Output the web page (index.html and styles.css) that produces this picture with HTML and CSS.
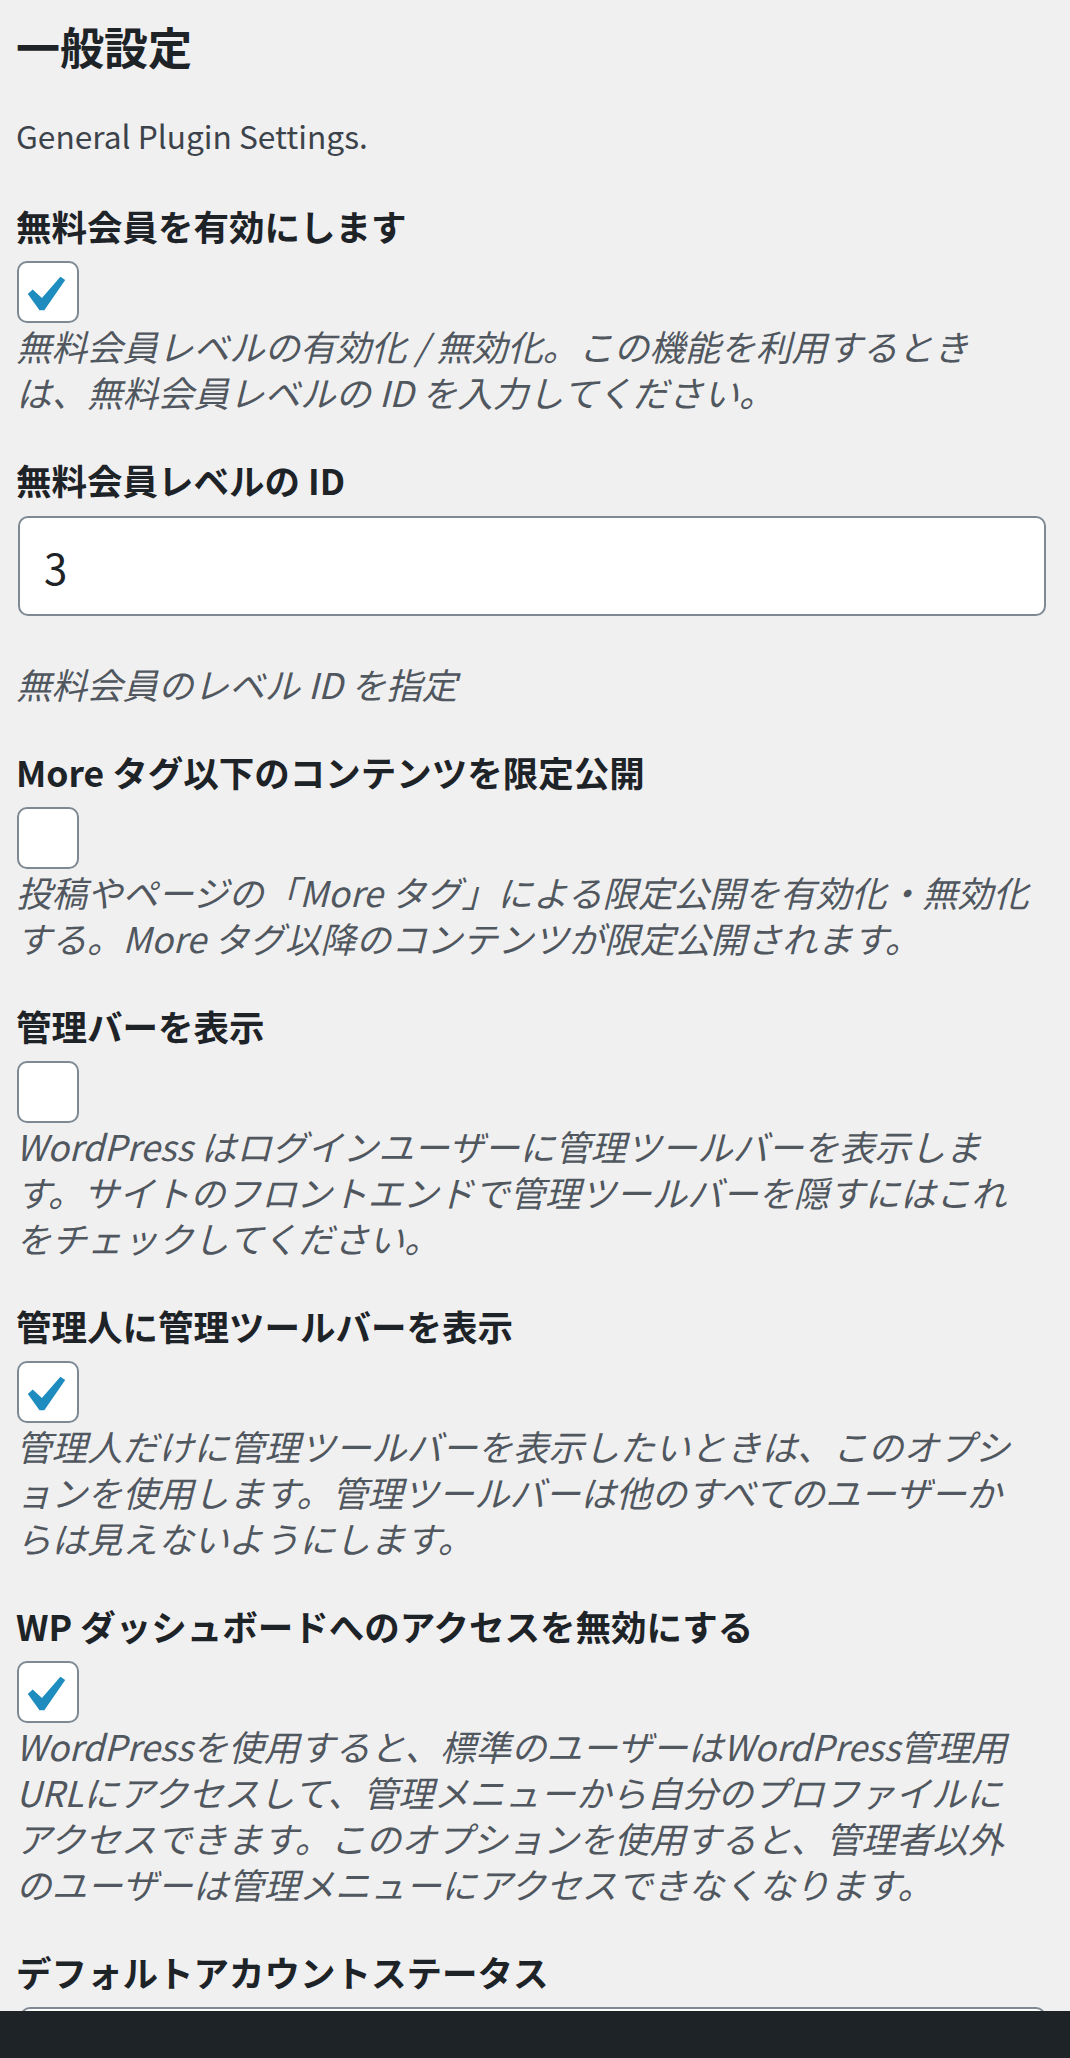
FILE: index.html
```
<!DOCTYPE html>
<html lang="ja">
    <head>
        <meta charset="UTF-8">
        <meta name="viewport" content="width=device-width, initial-scale=1.0">
        <title>一般設定</title>
        <link rel="stylesheet" href="styles.css">
    </head>
<body>
    <div class="screen">
        <div class="wrap">
            <h2>一般設定</h2>
            <p class="intro">General Plugin Settings.</p>

            <div class="field">
                <label class="field-label">無料会員を有効にします</label>
                <span class="check">
                    <svg viewBox="3.32 1.07 15.85 15.85"><path d="M14.83 4.89l1.34.94-5.81 8.38H9.02L5.78 9.67l1.34-1.25 2.57 2.4z"/></svg>
                </span>
                <p class="description">無料会員レベルの有効化 / 無効化。この機能を利用するとき<br>は、無料会員レベルの ID を入力してください。</p>
            </div>

            <div class="field">
                <label class="field-label" for="level">無料会員レベルの ID</label>
                <input class="text-input" type="text" id="level" value="3">
                <p class="description spaced">無料会員のレベル ID を指定</p>
            </div>

            <div class="field">
                <label class="field-label">More タグ以下のコンテンツを限定公開</label>
                <span class="check"></span>
                <p class="description">投稿やページの「More タグ」による限定公開を有効化・無効化<br>する。More タグ以降のコンテンツが限定公開されます。</p>
            </div>

            <div class="field">
                <label class="field-label">管理バーを表示</label>
                <span class="check"></span>
                <p class="description">WordPress はログインユーザーに管理ツールバーを表示しま<br>す。サイトのフロントエンドで管理ツールバーを隠すにはこれ<br>をチェックしてください。</p>
            </div>

            <div class="field">
                <label class="field-label">管理人に管理ツールバーを表示</label>
                <span class="check">
                    <svg viewBox="3.32 1.07 15.85 15.85"><path d="M14.83 4.89l1.34.94-5.81 8.38H9.02L5.78 9.67l1.34-1.25 2.57 2.4z"/></svg>
                </span>
                <p class="description">管理人だけに管理ツールバーを表示したいときは、このオプシ<br>ョンを使用します。管理ツールバーは他のすべてのユーザーか<br>らは見えないようにします。</p>
            </div>

            <div class="field">
                <label class="field-label">WP ダッシュボードへのアクセスを無効にする</label>
                <span class="check">
                    <svg viewBox="3.32 1.07 15.85 15.85"><path d="M14.83 4.89l1.34.94-5.81 8.38H9.02L5.78 9.67l1.34-1.25 2.57 2.4z"/></svg>
                </span>
                <p class="description">WordPressを使用すると、標準のユーザーはWordPress管理用<br>URLにアクセスして、管理メニューから自分のプロファイルに<br>アクセスできます。このオプションを使用すると、管理者以外<br>のユーザーは管理メニューにアクセスできなくなります。</p>
            </div>

            <div class="field">
                <label class="field-label">デフォルトアカウントステータス</label>
                <div class="select-box"></div>
            </div>
        </div>
        <div class="bottom-bar"></div>
    </div>
</body>
</html>
```

FILE: styles.css
```
html, body {
    margin: 0;
    padding: 0;
}
body {
    background: #f0f0f1;
    color: #1d2327;
    font-family: "Noto Sans CJK JP", "Noto Sans", sans-serif;
}
.screen {
    position: relative;
    height: 2058px;
    overflow: hidden;
}
.wrap {
    padding: 18px 24px 0 16px;
}
h2 {
    margin: 0;
    font-size: 44px;
    line-height: 56px;
    font-weight: bold;
}
.intro {
    margin: 38px 0 0;
    font-size: 31.7px;
    line-height: 46px;
    color: #3c434a;
}
.field {
    margin-top: 42px;
}
.intro + .field {
    margin-top: 45px;
}
.field-label {
    display: block;
    font-size: 35.5px;
    line-height: 46px;
    font-weight: bold;
    margin-bottom: 12px;
}
.check {
    display: block;
    box-sizing: border-box;
    width: 62px;
    height: 62px;
    margin-left: 1px;
    background: #fff;
    border: 2.5px solid #7e8993;
    border-radius: 10px;
}
.check svg {
    display: block;
    width: 57px;
    height: 57px;
    fill: #1e8cbe;
}
.description {
    margin: 0;
    font-size: 35.5px;
    line-height: 46px;
    font-style: italic;
    color: #50575e;
    white-space: nowrap;
}
.description.spaced {
    margin-top: 45px;
}
.text-input {
    display: block;
    box-sizing: border-box;
    width: calc(100% - 2px);
    height: 100px;
    margin: 13px 0 0 2px;
    padding: 0 24px;
    background: #fff;
    border: 2.5px solid #7e8993;
    border-radius: 10px;
    font-family: "Noto Sans CJK JP", sans-serif;
    font-size: 42px;
    color: #1d2327;
}
.select-box {
    box-sizing: border-box;
    height: 100px;
    margin: 12px 0 0 4px;
    background: #fff;
    border: 2.5px solid #7e8993;
    border-radius: 10px;
}
.bottom-bar {
    position: absolute;
    left: 0;
    right: 0;
    bottom: 0;
    height: 47px;
    background: #1d2327;
}
```
